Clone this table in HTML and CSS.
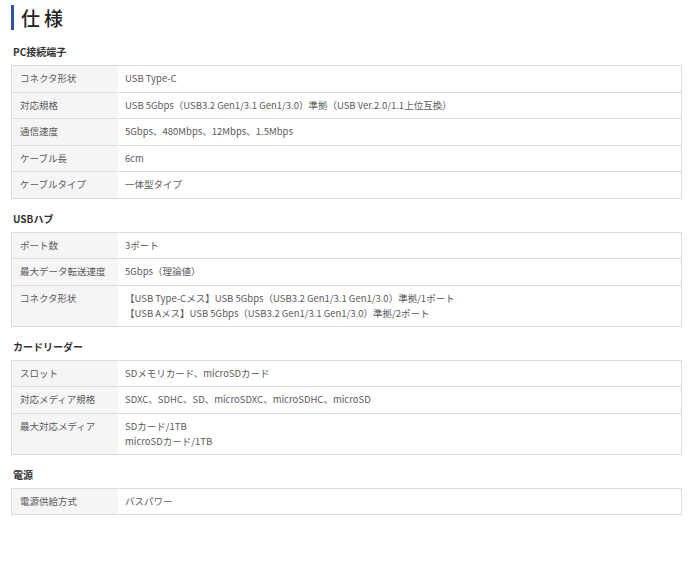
FILE: index.html
```html
<!DOCTYPE html>
<html lang="ja">
<head>
<meta charset="utf-8">
<link rel="stylesheet" href="styles.css">
</head>
<body>
<div class="page">
  <h1 class="title">仕様</h1>

  <h2 class="sec">PC接続端子</h2>
  <table class="spec">
    <tr><th>コネクタ形状</th><td>USB Type-C</td></tr>
    <tr><th>対応規格</th><td>USB 5Gbps（USB3.2 Gen1/3.1 Gen1/3.0）準拠（USB Ver.2.0/1.1上位互換）</td></tr>
    <tr><th>通信速度</th><td>5Gbps、480Mbps、12Mbps、1.5Mbps</td></tr>
    <tr><th>ケーブル長</th><td>6cm</td></tr>
    <tr><th>ケーブルタイプ</th><td>一体型タイプ</td></tr>
  </table>

  <h2 class="sec">USBハブ</h2>
  <table class="spec">
    <tr><th>ポート数</th><td>3ポート</td></tr>
    <tr><th>最大データ転送速度</th><td>5Gbps（理論値）</td></tr>
    <tr class="multi"><th>コネクタ形状</th><td>【USB Type-Cメス】USB 5Gbps（USB3.2 Gen1/3.1 Gen1/3.0）準拠/1ポート<br>【USB Aメス】USB 5Gbps（USB3.2 Gen1/3.1 Gen1/3.0）準拠/2ポート</td></tr>
  </table>

  <h2 class="sec">カードリーダー</h2>
  <table class="spec">
    <tr><th>スロット</th><td>SDメモリカード、microSDカード</td></tr>
    <tr><th>対応メディア規格</th><td>SDXC、SDHC、SD、microSDXC、microSDHC、microSD</td></tr>
    <tr class="multi"><th>最大対応メディア</th><td>SDカード/1TB<br>microSDカード/1TB</td></tr>
  </table>

  <h2 class="sec">電源</h2>
  <table class="spec">
    <tr><th>電源供給方式</th><td>バスパワー</td></tr>
  </table>
</div>
</body>
</html>
```

FILE: styles.css
```css
html, body {
  margin: 0;
  padding: 0;
  background: #fff;
}
body {
  font-family: "Noto Sans CJK JP", "Noto Sans", sans-serif;
  color: #555;
}
.page {
  padding: 5px 18px 0 11px;
}
.title {
  margin: 0;
  border-left: 3px solid #2a52a8;
  padding-left: 7px;
  font-size: 19px;
  line-height: 25px;
  font-weight: 500;
  letter-spacing: 4px;
  color: #222;
}
.sec {
  margin: 13px 0 6px 2px;
  font-size: 10px;
  line-height: 14px;
  font-weight: 700;
  color: #333;
}
.title + .sec {
  margin-top: 15px;
}
.spec {
  width: 100%;
  border-collapse: collapse;
  border: 1px solid #dcdcdc;
  font-size: 9.5px;
}
.spec th, .spec td {
  border-bottom: 1px solid #dcdcdc;
  padding: 5px 8px;
  line-height: 15.5px;
  text-align: left;
  vertical-align: top;
  font-weight: 400;
  color: #5a5a5a;
}
.spec .multi th, .spec .multi td {
  line-height: 15px;
}
.spec th {
  width: 90px;
  background: #f5f5f5;
}
.spec td {
  padding-left: 7px;
  background: #fff;
}
```
